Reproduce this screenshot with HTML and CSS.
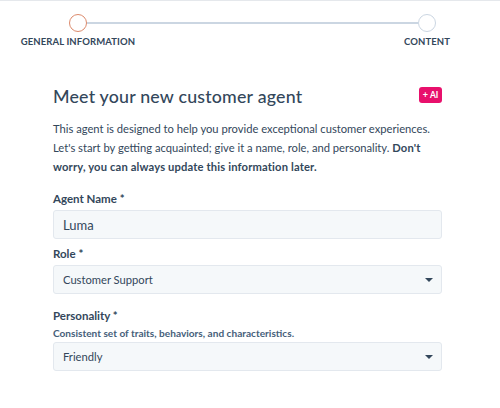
FILE: index.html
```html
<!DOCTYPE html>
<html>
<head>
<meta charset="utf-8">
<link rel="stylesheet" href="styles.css">
</head>
<body>
<div class="page">
  <div class="stepper">
    <div class="step">
      <div class="circle active"></div>
      <div class="step-label">General Information</div>
    </div>
    <div class="line"></div>
    <div class="step">
      <div class="circle"></div>
      <div class="step-label">Content</div>
    </div>
  </div>
  <div class="form">
    <div class="head">
      <h1 class="title">Meet your new customer agent</h1>
      <span class="ai-badge"><span class="spark">+</span>AI</span>
    </div>
    <p class="intro">This agent is designed to help you provide exceptional customer experiences. Let's start by getting acquainted; give it a name, role, and personality. <b class="strong">Don't worry, you can always update this information later.</b></p>
    <div class="field field-name">
      <div class="label">Agent Name *</div>
      <div class="input">Luma</div>
    </div>
    <div class="field field-role">
      <div class="label">Role *</div>
      <div class="input select"><span class="sel-text">Customer Support</span><span class="caret"></span></div>
    </div>
    <div class="field field-personality">
      <div class="label">Personality *</div>
      <div class="help">Consistent set of traits, behaviors, and characteristics.</div>
      <div class="input select"><span class="sel-text">Friendly</span><span class="caret"></span></div>
    </div>
  </div>
</div>
</body>
</html>
```
FILE: styles.css
```css
* { box-sizing: border-box; }
html, body { margin: 0; padding: 0; background: #fff; }
body {
  font-family: "Lato", "Open Sans", sans-serif;
  color: #33475b;
  width: 500px;
  height: 408px;
  overflow: hidden;
}
.page {
  border-top: 1px solid #e5e8ec;
  height: 408px;
}
.stepper {
  display: flex;
  align-items: flex-start;
  padding: 13px 64px 0 69px;
}
.step {
  width: 18px;
  display: flex;
  flex-direction: column;
  align-items: center;
}
.circle {
  width: 18px;
  height: 18px;
  border-radius: 50%;
  border: 1.5px solid #cbd6e2;
  background: #fff;
  flex: none;
}
.circle.active { border-color: #dc8a6c; }
.line {
  flex: 1;
  height: 1.5px;
  background: #cbd6e2;
  margin-top: 8.25px;
}
.step-label {
  white-space: nowrap;
  text-transform: uppercase;
  font-weight: 700;
  font-size: 9.5px;
  letter-spacing: 0.1px;
  margin-top: 4px;
  color: #33475b;
}
.form {
  margin: 0 58px 0 53px;
  padding-top: 38px;
}
.head {
  display: flex;
  justify-content: space-between;
  align-items: flex-start;
}
.title {
  margin: 0;
  font-size: 17.8px;
  font-weight: 500;
  line-height: 22px;
  color: #33475b;
  letter-spacing: 0.2px;
}
.ai-badge {
  margin-top: 2px;
  height: 16px;
  width: 23px;
  justify-content: center;
  background: #e8106c;
  color: #fff;
  font-size: 8.5px;
  font-weight: 700;
  border-radius: 3px;
  line-height: 12px;
  display: inline-flex;
  align-items: center;
  gap: 2px;
}
.spark { font-size: 9px; }
.intro {
  margin: 12px 0 0;
  max-width: 380px;
  font-size: 11.2px;
  line-height: 19px;
  color: #33475b;
}
.strong { font-weight: 700; letter-spacing: 0.15px; }
.field-name { margin-top: 16px; }
.field-role { margin-top: 8px; }
.field-personality { margin-top: 15px; }
.label {
  font-size: 11.5px;
  font-weight: 700;
  line-height: 14px;
  margin-bottom: 4px;
}
.help {
  font-size: 10.1px;
  font-weight: 700;
  color: #46607a;
  line-height: 12px;
  margin-top: 1px;
  margin-bottom: 3px;
}
.input {
  height: 29px;
  background: #f5f8fa;
  border: 1px solid #e3e8ee;
  border-radius: 3px;
  padding: 0 9px;
  display: flex;
  align-items: center;
  font-size: 13px;
  color: #33475b;
}
.select { justify-content: space-between; font-size: 11.2px; }
.caret {
  width: 0;
  height: 0;
  border-left: 4px solid transparent;
  border-right: 4px solid transparent;
  border-top: 4.5px solid #33475b;
  margin-right: -1px;
}
```
